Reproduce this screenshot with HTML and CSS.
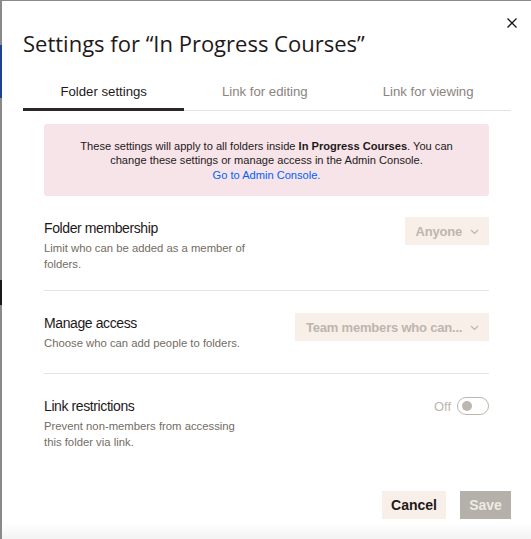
FILE: index.html
```html
<!DOCTYPE html>
<html>
<head>
<meta charset="utf-8">
<link rel="stylesheet" href="styles.css">
</head>
<body>
<div class="backdrop">
  <div class="modal">
    <button class="close" aria-label="Close">
      <svg width="10" height="10" viewBox="0 0 10 10"><path d="M0.5 0.5L9.5 9.5M9.5 0.5L0.5 9.5" stroke="#1e1919" stroke-width="1.3" fill="none"/></svg>
    </button>
    <h1 class="title">Settings for “In Progress Courses”</h1>
    <div class="tabs">
      <div class="tab active">Folder settings</div>
      <div class="tab">Link for editing</div>
      <div class="tab">Link for viewing</div>
    </div>
    <div class="content">
      <div class="banner">
        These settings will apply to all folders inside <b>In Progress Courses</b>. You can<br>
        change these settings or manage access in the Admin Console.<br>
        <a href="#">Go to Admin Console.</a>
      </div>
      <div class="row row-first">
        <div class="info">
          <div class="label">Folder membership</div>
          <div class="desc">Limit who can be added as a member of folders.</div>
        </div>
        <div class="select"><span class="sel-text">Anyone</span><svg class="chev" width="9" height="6" viewBox="0 0 9 6"><path d="M1 1L4.5 4.5L8 1" stroke="#bdb6ae" stroke-width="1.2" fill="none"/></svg></div>
      </div>
      <div class="row row-mid">
        <div class="info">
          <div class="label">Manage access</div>
          <div class="desc">Choose who can add people to folders.</div>
        </div>
        <div class="select wide"><span class="sel-text">Team members who can...</span><svg class="chev" width="9" height="6" viewBox="0 0 9 6"><path d="M1 1L4.5 4.5L8 1" stroke="#bdb6ae" stroke-width="1.2" fill="none"/></svg></div>
      </div>
      <div class="row row-last">
        <div class="info">
          <div class="label">Link restrictions</div>
          <div class="desc narrow">Prevent non-members from accessing this folder via link.</div>
        </div>
        <div class="toggle-wrap">
          <span class="off">Off</span>
          <span class="toggle"><span class="knob"></span></span>
        </div>
      </div>
    </div>
    <div class="footer">
      <button class="btn cancel">Cancel</button>
      <button class="btn save">Save</button>
    </div>
  </div>
</div>
</body>
</html>
```
FILE: styles.css
```css
html, body {
  margin: 0;
  padding: 0;
  height: 100%;
}
body {
  background: #7a7a7a;
  font-family: "Liberation Sans", Arial, sans-serif;
  color: #1e1919;
}
.backdrop {
  height: 100%;
  padding: 1px 0 0 2px;
  box-sizing: border-box;
  background: linear-gradient(to bottom, #8a8a8a 0, #8a8a8a 45px, #1f3f99 45px, #1f3f99 98px, #8a8a8a 98px, #8a8a8a 280px, #1a1a1a 280px, #1a1a1a 305px, #8a8a8a 305px, #8a8a8a 100%);
}
.modal {
  position: relative;
  height: 100%;
  background: linear-gradient(to bottom, #fff 0, #fff 522px, #f3f3f3 100%);
  box-sizing: border-box;
  padding: 0 20px 0 21px;
  display: flex;
  flex-direction: column;
}
.close {
  position: absolute;
  right: 14px;
  top: 17px;
  border: 0;
  background: none;
  padding: 0;
  width: 10px;
  height: 10px;
  display: flex;
}
.title {
  margin: 28px 0 0 0;
  font-family: "Open Sans", sans-serif;
  font-weight: 400;
  font-size: 22px;
  line-height: 28px;
  color: #1e1919;
}
.tabs {
  margin-top: 19px;
  display: flex;
  border-bottom: 1px solid #e6e4e2;
}
.tab {
  flex: 1 1 auto;
  text-align: center;
  font-size: 13.2px;
  line-height: 17px;
  padding: 7px 0 8px;
  color: #8a8380;
  margin-bottom: -1px;
  border-bottom: 3px solid transparent;
}
.tab.active {
  color: #1e1919;
  border-bottom-color: #2b2727;
}
.content {
  padding: 0 22px 0 21px;
  display: flex;
  flex-direction: column;
}
.banner {
  margin-top: 13px;
  background: #f6e4e9;
  border-radius: 3px;
  text-align: center;
  font-size: 11.1px;
  line-height: 14.4px;
  color: #1e1919;
  padding: 15px 8px 14px;
}
.banner b {
  font-weight: 700;
}
.banner a {
  color: #0061fe;
  text-decoration: none;
}
.row {
  display: flex;
  justify-content: space-between;
  align-items: flex-start;
  padding: 23px 0 22px;
  border-bottom: 1px solid #e6e4e2;
}
.row-first {
  padding-bottom: 18px;
}
.row-last {
  border-bottom: 0;
}
.info {
  display: flex;
  flex-direction: column;
}
.label {
  font-size: 14px;
  letter-spacing: -0.4px;
  line-height: 18px;
  color: #1e1919;
}
.desc {
  margin-top: 3px;
  font-size: 11.3px;
  line-height: 16px;
  color: #736c64;
  width: 210px;
}
.desc.narrow {
  width: 200px;
}
.select {
  margin-top: -2px;
  height: 28px;
  box-sizing: border-box;
  background: #f7efe8;
  color: #bdb6ae;
  font-size: 13px;
  letter-spacing: -0.2px;
  font-weight: 700;
  display: flex;
  align-items: center;
  padding: 0 10px 0 11px;
  gap: 8px;
  white-space: nowrap;
}
.select.wide {
  margin-top: -1px;
  width: 194px;
}
.sel-text {
  flex: 1;
}
.chev {
  margin-top: 1px;
  flex: none;
}
.toggle-wrap {
  display: flex;
  align-items: center;
  gap: 6px;
  margin-top: 0;
}
.off {
  font-size: 13px;
  color: #bdb6ae;
}
.toggle {
  width: 32px;
  height: 18px;
  box-sizing: border-box;
  border: 1px solid #bdb6ae;
  border-radius: 9px;
  display: flex;
  align-items: center;
  padding: 0 3.5px;
}
.knob {
  width: 10px;
  height: 10px;
  border-radius: 50%;
  background: #bdb6ae;
}
.footer {
  margin-top: auto;
  margin-bottom: 20px;
  display: flex;
  justify-content: flex-end;
  gap: 14px;
}
.btn {
  height: 28px;
  border: 0;
  font-family: "Liberation Sans", Arial, sans-serif;
  font-weight: 700;
  font-size: 14px;
  padding: 0;
}
.cancel {
  background: #f7efe8;
  color: #1e1919;
  width: 64px;
}
.save {
  background: #b5b0aa;
  color: #eeeae6;
  width: 51px;
}
```
